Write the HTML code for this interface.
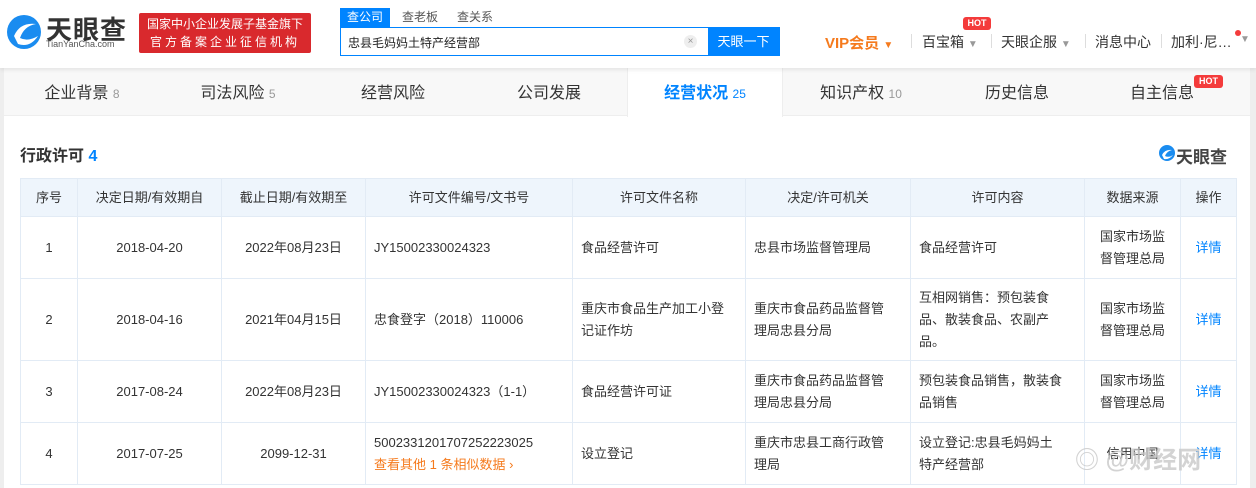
<!DOCTYPE html>
<html><head><meta charset="utf-8"><style>
*{margin:0;padding:0;box-sizing:border-box}
body{width:1256px;height:487px;overflow:hidden;background:#fff;font-family:"Liberation Sans","Noto Sans CJK SC",sans-serif;color:#333;position:relative}
.hdr{position:absolute;left:0;top:0;width:1256px;height:68px;background:#fff;box-shadow:0 2px 4px rgba(0,0,0,.08);z-index:2}
.abs{position:absolute}
.tabs{position:absolute;left:4px;top:68px;width:1246px;height:48px;background:#f8f8f8;border-bottom:1px solid #eee}
.tab{position:absolute;top:2px;height:48px;line-height:48px;font-size:16px;color:#333;text-align:center;width:156px}
.tab small{font-size:12px;color:#999}
.left{position:absolute;left:0;top:68px;width:4px;height:420px;background:#eee}
.right{position:absolute;left:1250px;top:68px;width:6px;height:420px;background:#eee}
table{position:absolute;left:20px;top:178px;border-collapse:collapse;font-size:13px;color:#333}
td,th{border:1px solid #e2ebf5;font-weight:normal;line-height:22px}
th{background:#eef5fc;height:38px;text-align:center}
td{padding:0 8px}
.c{text-align:center}
a{color:#0084ff;text-decoration:none}
</style></head><body>
<div class="hdr">
 <svg class="abs" style="left:6px;top:12px" width="36" height="40" viewBox="0 0 36 40"><circle cx="18" cy="20" r="17" fill="#1a8cf0"/><path d="M8 24 Q14 10 30 12 Q18 14 14 26 Q22 30 32 24 Q24 36 12 32 Z" fill="#fff"/></svg>
 <div class="abs" style="left:46px;top:10px;font-size:26px;font-weight:bold;color:#333;letter-spacing:1px">天眼查</div>
 <div class="abs" style="left:46px;top:39px;font-size:9px;color:#555">TianYanCha.com</div>
 <div class="abs" style="left:139px;top:13px;width:172px;height:40px;background:#d9292d;border-radius:2px;color:#fff;font-size:12px;line-height:18px;padding:2px 0;text-align:center;white-space:nowrap">国家中小企业发展子基金旗下<br><span style="letter-spacing:3px">官方备案企业征信机构</span></div>
 <div class="abs" style="left:340px;top:8px;width:50px;height:19px;background:#0084ff;color:#fff;font-size:12px;text-align:center;line-height:19px">查公司</div>
 <div class="abs" style="left:402px;top:8px;font-size:12px;color:#555;line-height:19px">查老板</div>
 <div class="abs" style="left:457px;top:8px;font-size:12px;color:#555;line-height:19px">查关系</div>
 <div class="abs" style="left:340px;top:27px;width:440px;height:29px;border:1px solid #0084ff;background:#fff"></div>
 <div class="abs" style="left:348px;top:34px;font-size:12px;color:#222">忠县毛妈妈土特产经营部</div>
 <div class="abs" style="left:684px;top:35px;width:13px;height:13px;border-radius:50%;background:#eee;font-size:10px;color:#999;text-align:center;line-height:13px">×</div>
 <div class="abs" style="left:708px;top:27px;width:71px;height:29px;background:#0084ff;color:#fff;font-size:13px;text-align:center;line-height:29px">天眼一下</div>
 <div class="abs" style="left:825px;top:32px;font-size:15px;font-weight:bold;color:#f57a1d">VIP会员 <span style="font-size:10px">▼</span></div>
 <div class="abs" style="left:911px;top:34px;width:1px;height:14px;background:#ddd"></div>
 <div class="abs" style="left:922px;top:32px;font-size:14px;color:#333">百宝箱 <span style="font-size:10px;color:#999">▼</span></div>
 <div class="abs" style="left:963px;top:17px;width:28px;height:13px;background:#f43b3b;border-radius:3px;color:#fff;font-size:9px;font-weight:bold;text-align:center;line-height:13px">HOT</div>
 <div class="abs" style="left:991px;top:34px;width:1px;height:14px;background:#ddd"></div>
 <div class="abs" style="left:1001px;top:32px;font-size:14px;color:#333">天眼企服 <span style="font-size:10px;color:#999">▼</span></div>
 <div class="abs" style="left:1085px;top:34px;width:1px;height:14px;background:#ddd"></div>
 <div class="abs" style="left:1095px;top:32px;font-size:14px;color:#333">消息中心</div>
 <div class="abs" style="left:1161px;top:34px;width:1px;height:14px;background:#ddd"></div>
 <div class="abs" style="left:1171px;top:32px;font-size:14px;color:#333">加利·尼…</div>
 <div class="abs" style="left:1235px;top:30px;width:6px;height:6px;border-radius:50%;background:#f43b3b"></div>
 <div class="abs" style="left:1240px;top:34px;font-size:10px;color:#999">▼</div>
</div>
<div class="left"></div><div class="right"></div>
<div class="tabs">
 <div class="tab" style="left:0">企业背景 <small>8</small></div>
 <div class="tab" style="left:156px">司法风险 <small>5</small></div>
 <div class="tab" style="left:311px">经营风险</div>
 <div class="tab" style="left:467px">公司发展</div>
 <div class="tab" style="left:623px;top:0;height:49px;line-height:52px;background:#fff;color:#0084ff;font-weight:bold;border-left:1px solid #eee;border-right:1px solid #eee">经营状况 <small style="color:#0084ff;font-weight:normal">25</small></div>
 <div class="tab" style="left:779px">知识产权 <small>10</small></div>
 <div class="tab" style="left:935px">历史信息</div>
 <div class="tab" style="left:1080px">自主信息</div>
 <div class="abs" style="left:1190px;top:7px;width:29px;height:13px;background:#f43b3b;border-radius:3px;color:#fff;font-size:9px;font-weight:bold;text-align:center;line-height:13px">HOT</div>
</div>
<div class="abs" style="left:20px;top:142px;font-size:16px;font-weight:bold;color:#333">行政许可 <span style="color:#0084ff">4</span></div>
<svg class="abs" style="left:1159px;top:145px" width="16" height="16" viewBox="0 0 16 16"><circle cx="8" cy="8" r="8" fill="#1a8cf0"/><path d="M3 10 Q6 4 13 5 Q8 6 6 11 Q10 13 14 10 Q10 15 5 14Z" fill="#fff"/></svg>
<div class="abs" style="left:1176px;top:143px;font-size:17px;font-weight:bold;color:#444">天眼查</div>
<table>
<tr><th style="width:57px">序号</th><th style="width:144px">决定日期/有效期自</th><th style="width:144px">截止日期/有效期至</th><th style="width:207px">许可文件编号/文书号</th><th style="width:173px">许可文件名称</th><th style="width:165px">决定/许可机关</th><th style="width:174px">许可内容</th><th style="width:96px">数据来源</th><th style="width:56px">操作</th></tr>
<tr style="height:62px"><td class="c">1</td><td class="c">2018-04-20</td><td class="c">2022年08月23日</td><td>JY15002330024323</td><td>食品经营许可</td><td>忠县市场监督管理局</td><td>食品经营许可</td><td class="c">国家市场监<br>督管理总局</td><td class="c"><a>详情</a></td></tr>
<tr style="height:82px"><td class="c">2</td><td class="c">2018-04-16</td><td class="c">2021年04月15日</td><td>忠食登字（2018）110006</td><td>重庆市食品生产加工小登<br>记证作坊</td><td>重庆市食品药品监督管<br>理局忠县分局</td><td>互相网销售：预包装食<br>品、散装食品、农副产<br>品。</td><td class="c">国家市场监<br>督管理总局</td><td class="c"><a>详情</a></td></tr>
<tr style="height:62px"><td class="c">3</td><td class="c">2017-08-24</td><td class="c">2022年08月23日</td><td>JY15002330024323（1-1）</td><td>食品经营许可证</td><td>重庆市食品药品监督管<br>理局忠县分局</td><td>预包装食品销售，散装食<br>品销售</td><td class="c">国家市场监<br>督管理总局</td><td class="c"><a>详情</a></td></tr>
<tr style="height:62px"><td class="c">4</td><td class="c">2017-07-25</td><td class="c">2099-12-31</td><td>5002331201707252223025<br><span style="color:#f57a1d">查看其他 1 条相似数据 ›</span></td><td>设立登记</td><td>重庆市忠县工商行政管<br>理局</td><td>设立登记:忠县毛妈妈土<br>特产经营部</td><td class="c">信用中国</td><td class="c"><a>详情</a></td></tr>
</table>
<div class="abs" style="left:1075px;top:440px;font-size:24px;color:rgba(200,200,200,.8);font-weight:bold">◎ @财经网</div>
</body></html>
